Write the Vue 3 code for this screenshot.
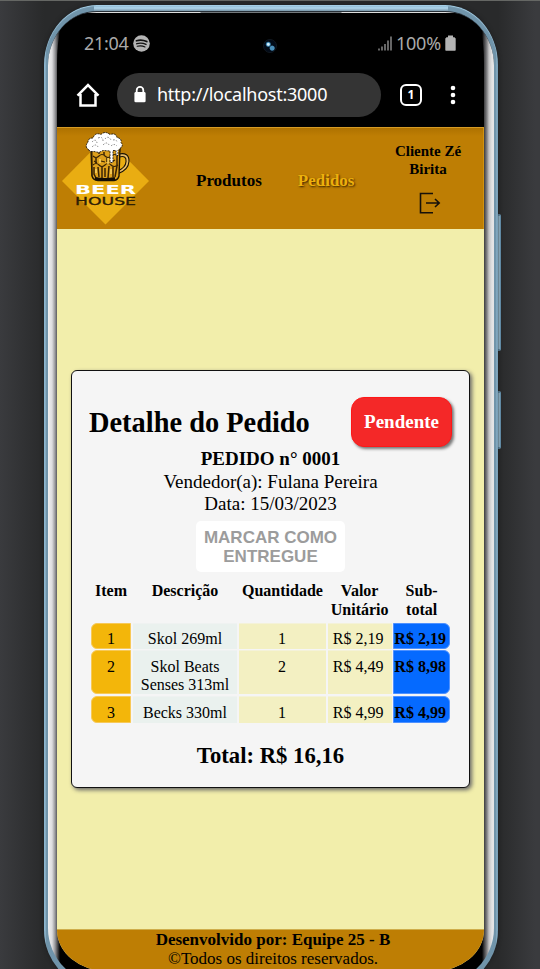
<script setup>
const items = [
  { id: 1, name: 'Skol 269ml', qty: 1, price: 'R$ 2,19', sub: 'R$ 2,19' },
  { id: 2, name: 'Skol Beats Senses 313ml', qty: 2, price: 'R$ 4,49', sub: 'R$ 8,98' },
  { id: 3, name: 'Becks 330ml', qty: 1, price: 'R$ 4,99', sub: 'R$ 4,99' },
]
const headings = ['Item', 'Descrição', 'Quantidade', 'Valor Unitário', 'Sub-total']
</script>

<template>
  <div class="stage">
    <div class="side-button volume"></div>
    <div class="side-button power"></div>
    <div class="phone">
      <div class="metal">
        <div class="glass">
          <div class="status">
            <span class="clock">21:04</span>
            <svg class="spotify" width="17" height="17" viewBox="0 0 17 17">
              <circle cx="8.5" cy="8.5" r="8.3" fill="#b4b4b4" />
              <g fill="none" stroke="#111" stroke-linecap="round">
                <path d="M3.4 5.8Q8.5 4 13.8 6.6" stroke-width="1.7" />
                <path d="M3.8 8.7Q8.5 7.2 13 9.4" stroke-width="1.4" />
                <path d="M4.2 11.3Q8.3 10.1 12 12" stroke-width="1.1" />
              </g>
            </svg>
            <svg class="signal" width="14" height="15" viewBox="0 0 14 15">
              <path d="M1 12.500v2M4 10.500v4M7 8v6.500M10 4.500v10M13 .5v14" stroke="#aaa" stroke-width="1.200" />
            </svg>
            <span class="percent">100%</span>
            <svg class="battery" width="11" height="16" viewBox="0 0 11 16">
              <path d="M3 .5h5v1.700h1.500l1.200 1.300V15q0 .7-.7.7H1q-.7 0-.7-.7V3.500L1.500 2.200H3z" fill="#b4b4b4" />
            </svg>
          </div>
          <div class="browser">
            <svg class="home" width="24" height="24" viewBox="0 0 24 24">
              <path d="M1.500 12.600 12 2 22.500 12.600M4.500 11v11.500h15V11" fill="none" stroke="#fff" stroke-width="2.500" />
            </svg>
            <div class="address">
              <svg width="12" height="17" viewBox="0 0 12 17">
                <path d="M2.700 7V4.200a3.300 3.300 0 0 1 6.600 0V7" fill="none" stroke="#fff" stroke-width="1.800" />
                <rect x=".4" y="6" width="11.200" height="10.300" rx="1.400" fill="#fff" />
              </svg>
              <span>http://localhost:3000</span>
            </div>
            <div class="tabs">1</div>
            <svg class="dots" width="6" height="20" viewBox="0 0 6 20">
              <circle cx="3" cy="3" r="2.300" fill="#fff" /><circle cx="3" cy="10" r="2.300" fill="#fff" /><circle cx="3" cy="17" r="2.300" fill="#fff" />
            </svg>
          </div>
          <div class="site">
            <header>
              <svg class="logo" width="88" height="94" viewBox="0 0 88 94">
                <path d="M43.500 6 87 50 43.500 93.500 0 50z" fill="#e9ad12" />
                <path d="M57 24.500q9-2 8.500 6Q65 38 56 41" fill="none" stroke="#1b1305" stroke-width="4" />
                <path d="M57 24.500q9-2 8.500 6Q65 38 56 41" fill="none" stroke="#e8bd68" stroke-width="1.800" />
                <path d="M29 17h29l-1 28q-1 4-5 4.500H36q-5-.5-6-4.500z" fill="#dda01c" stroke="#1b1305" stroke-width="1.400" />
                <g fill="none" stroke="#382304" stroke-width="1.100">
                  <path d="M31 25q3 3 6 0t6 0 6 0 7 0M31 34q3-3 6 0t6 0 6 0 7 0" />
                  <path d="M32 36v7l2 4M36 36l1 10M40 35v12M43 37v9M47 35l-1 12M51 36v10M55 35l-2 11M34 27v5M37 19v4M42 21v3M55 20v14M45 27v4" stroke-width="1.500" />
                  <path d="M30 20v25M32 30l3 2M39 30l4 1M49 31l4-2" />
                </g>
                <path d="M33 47.500q10 2 20 0" fill="none" stroke="#130d04" stroke-width="3" />
                <path d="M46 27v6M38 28v4M49 38v5M34 38v4" stroke="#f7d366" stroke-width="1.500" />
                <path d="M27 19q-5-3-1-8 0-4 5-4 2-6 8-3.500 4-4 9 0 6-2 7 3 5 1 4 5 3 3-1 6l-2 2v5h-2v-5h-3v12h-3V20l-7-.5-4 2-5-1h-4z" fill="#fff" />
                <path d="M27 19q-5-3-1-8 0-4 5-4 2-6 8-3.500 4-4 9 0 6-2 7 3 5 1 4 5 3 3-1 6l-2 2v5h-2v-5h-3v12h-3V20l-7-.5-4 2-5-1h-4z" fill="none" stroke="#17130d" stroke-width=".9" stroke-dasharray="2 .9" />
                <path d="M30 11q4-4 5 1M36 7q5-2 5 3M43 8q3-4 6 1M51 9q4-1 4 3M30 16q4-4 6 0M41 14q4-4 6 0M49 15q3-3 6 0" fill="none" stroke="#555" stroke-width=".7" stroke-dasharray="1.500 1.500" />
                <text x="13" y="62.500" textLength="61" lengthAdjust="spacingAndGlyphs" class="beer">BEER</text>
                <text x="13" y="74" textLength="61" lengthAdjust="spacingAndGlyphs" class="house">HOUSE</text>
              </svg>
              <nav><a>Produtos</a><a class="active">Pedidos</a></nav>
              <div class="user">
                <strong>Cliente Zé<br>Birita</strong>
                <svg width="22" height="22" viewBox="0 0 22 22">
                  <path d="M14 1.500H1.500v19.300H14M7 11h13M16 7l4.200 4-4.200 4" fill="none" stroke="#17110a" stroke-width="1.600" />
                </svg>
              </div>
            </header>
            <main>
              <section class="card">
                <div class="top"><h1>Detalhe do Pedido</h1><div class="badge">Pendente</div></div>
                <div class="info"><strong>PEDIDO n° 0001</strong><span>Vendedor(a): Fulana Pereira</span><span>Data: 15/03/2023</span></div>
                <button disabled>MARCAR COMO<br>ENTREGUE</button>
                <div class="row head"><div v-for="h in headings" :key="h">{{ h }}</div></div>
                <div class="body">
                  <div v-for="item in items" :key="item.id" class="row line">
                    <div class="id">{{ item.id }}</div>
                    <div class="name">{{ item.name }}</div>
                    <div class="num">{{ item.qty }}</div>
                    <div class="num">{{ item.price }}</div>
                    <div class="sub">{{ item.sub }}</div>
                  </div>
                </div>
                <h2>Total: R$ 16,16</h2>
              </section>
            </main>
            <footer><strong>Desenvolvido por: Equipe 25 - B</strong><span>©Todos os direitos reservados.</span></footer>
          </div>
          <div class="camera"></div>
        </div>
      </div>
    </div>
  </div>
</template>

<style>
body { margin: 0; overflow: hidden; }
</style>

<style scoped>
* { box-sizing: border-box; }
.stage { position: relative; width: 540px; height: 969px; overflow: hidden; padding: 4px 0 0 44px; border-top: 1px solid #656764; background: linear-gradient(90deg, #3a3b3e, #292a2b 44px, #292a2b 498px, #3a3b3e 535px); font-family: "Liberation Serif", serif; color: #000; }
.phone { position: relative; width: 454px; height: 985px; padding: 6px 4px; border-radius: 53px 53px 60px 60px / 60px 60px 60px 60px; background: linear-gradient(#7da9c3, #b0d7ed 3px, #7895a7 6px, transparent 7px) 50px 0 / 354px 8px no-repeat, linear-gradient(90deg, #75a0bd, #9dc5dc 1px, #7094aa 2px, #7094aa 452px, #91b8cf 453px, #5c819a); box-shadow: inset 0 1px 1px #a9d2e9, 0 0 4px #1c1d1f; }
.metal { position: relative; height: 973px; padding: 2px 10px 0 9px; border-radius: 49px 49px 56px 56px / 54px 54px 56px 56px; background: linear-gradient(90deg, #f0f0f0 0, #dddddf 4px, #99999c 7px, #5b5b5d 9px, #000 12px, #000 434px, #3b3b3d 436px, #858587 439px, #c3c3c4 441px, #e3e3e4 444px, #e5e5e6); border-top: 1px solid #283038; overflow: hidden; }
.metal::before { content: ""; position: absolute; inset: 0 33px auto 35px; height: 1px; background: linear-gradient(90deg, #ddd 117px, #74797c 118px, #74797c 258px, #ddd 259px); }
.glass { position: relative; height: 957px; overflow: hidden; background: #000; border-radius: 12px 12px 50px 50px / 50px 50px 41px 41px; font-family: "Noto Sans", sans-serif; }
.status { display: flex; align-items: center; height: 58px; padding: 0 28px 0 27px; color: #aaa; font-size: 18px; }
.clock { width: 46px; letter-spacing: -.3px; }
.spotify { margin-left: 3px; }
.signal { margin-left: auto; margin-right: 4px; }
.percent { width: 46px; letter-spacing: -.25px; }
.battery { margin-left: 3px; }
.browser { display: flex; align-items: center; height: 55px; padding: 0 28px 10px 19px; }
.address { display: flex; align-items: center; gap: 11px; width: 264px; height: 44px; margin-left: 17px; padding-left: 17px; border-radius: 22px; background: #343434; color: #fff; font-size: 18px; letter-spacing: -.25px; white-space: nowrap; }
.address span { padding-bottom: 1px; }
.tabs { display: flex; align-items: center; justify-content: center; width: 22px; height: 22px; margin-left: 19px; border: 2px solid #fff; border-radius: 6px; color: #fff; font-size: 12px; font-weight: bold; }
.dots { margin-left: auto; }
.camera { position: absolute; left: 206px; top: 25px; width: 14px; height: 14px; border-radius: 50%; border: 1px solid #111820; background: radial-gradient(circle at 36% 36%, #d0efff 0 1px, #347da9 2px, transparent 3px), radial-gradient(circle at 68% 68%, #4b91bd 0 2px, transparent 3px), #020b18; }
.site { height: 844px; font-family: "Liberation Serif", serif; background: #f2eeab; }
header { display: flex; height: 102px; background: linear-gradient(#ae7200, #be7e04 8px); border-top: 1px solid #d69b24; border-right: 1px solid #d19312; }
.logo { margin: 3px 0 0 5px; flex: none; }
.beer { font: bold 12.500px "DejaVu Sans", sans-serif; fill: #fff; }
.house { font: 11px "DejaVu Sans", sans-serif; fill: #2d2006; stroke: #2d2006; stroke-width: .3px; }
nav { display: flex; align-items: center; gap: 36px; margin-left: 46px; padding-top: 4px; font-size: 17px; font-weight: bold; }
.active { color: #edb00c; text-shadow: 1px 1px 2px #332000; }
.user { display: flex; flex-direction: column; align-items: center; width: 70px; margin-left: auto; margin-right: 20px; padding-top: 14px; font-size: 15px; line-height: 18px; text-align: center; }
.user svg { margin: 14px 0 0 4px; }
main { display: flex; height: 700px; padding: 141px 14px 0; }
.card { display: flex; flex-direction: column; align-items: center; width: 399px; height: 418px; padding: 25px 17px 0; border: 1px solid #111; border-radius: 6px; background: #f5f5f5; box-shadow: 2px 2px 4px #666; }
.top { display: flex; width: 100%; height: 51px; align-items: center; justify-content: space-between; }
h1 { margin: 2px 0 0; font-size: 28.400px; line-height: 33px; white-space: nowrap; }
.badge { width: 101px; height: 50px; border: 1px solid #ff1717; border-radius: 13px; background: #f42828; box-shadow: 2px 2px 3px #777; color: #fff; font-size: 19px; line-height: 48px; font-weight: bold; text-align: center; }
.info { display: flex; flex-direction: column; align-items: center; margin-top: 1px; font-size: 19px; line-height: 22.500px; }
button { flex: none; width: 149px; height: 51px; margin-top: 5px; padding: 2px 0 0; border: 0; border-radius: 5px; background: #fff; color: #9c9c9c; font: bold 17px/19px "Liberation Sans", sans-serif; }
.row { display: grid; grid-template-columns: 39.400px 104.500px 86.400px 64px 56px; gap: 2px; width: 358.300px; text-align: center; }
.head { height: 42px; margin-top: 9px; font-size: 16px; line-height: 19px; font-weight: bold; }
.head > :last-child { padding: 0 10px; }
.body { display: flex; flex-direction: column; gap: 2px; }
.line { height: 25px; font-size: 16px; line-height: 18px; }
.line:nth-child(2) { height: 44.500px; }
.line:nth-child(3) { height: 26px; }
.line > div { padding-top: 6px; border: solid #f5f5f577; border-width: 1px 0 0; white-space: nowrap; }
.line:nth-child(2) > div { padding-top: 7px; }
.line:nth-child(3) > div { padding-top: 7px; }
.line .id { background: #f3b60a; border-radius: 6px 0 0 6px; border: 1px solid #f7c958; }
.line .name { padding-left: 4px; padding-right: 4px; background: #eaf1ee; white-space: normal; }
.line .num { padding-right: 1px; background: #f3f0c2; }
.line .num:nth-child(4) { padding-right: 3px; }
.line .sub { margin-left: -1px; padding-right: 2px; border: 1px solid #4e91ff; border-radius: 0 6px 6px 0; background: #056aff; font-weight: bold; }
h2 { margin: 21px 0 0; font-size: 22.700px; line-height: 26px; }
footer { display: flex; flex-direction: column; align-items: center; height: 42px; padding-left: 5px; background: #be7e04; border-top: 1px solid #cfad4a; font-size: 17px; line-height: 19px; }
.side-button { position: absolute; left: 497px; width: 4px; border: solid #6b9ab7; border-width: 2px 1px; border-radius: 0 2px 2px 0; background: #a6d0e8; }
.volume { top: 213px; height: 137px; }
.power { top: 390px; height: 58px; }
</style>
